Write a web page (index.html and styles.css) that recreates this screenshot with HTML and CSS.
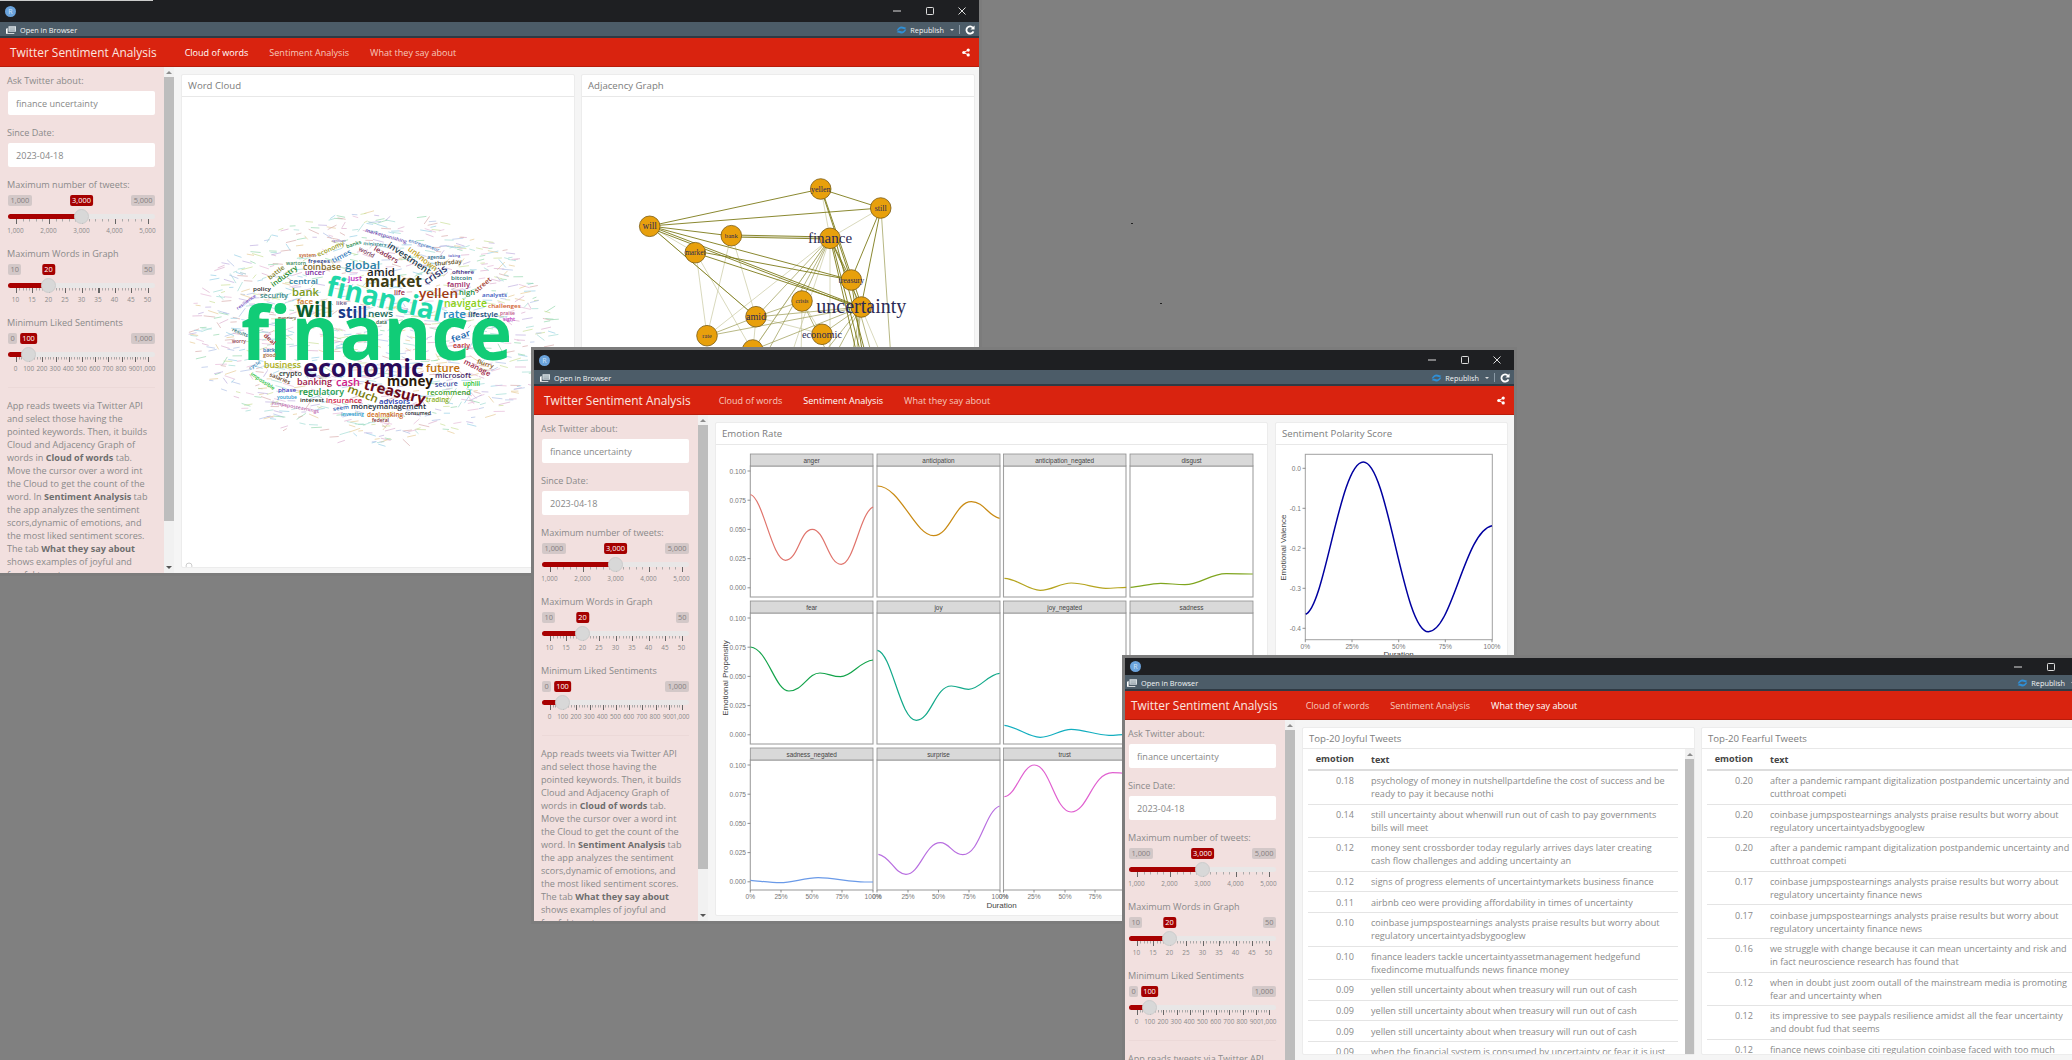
FILE: index.html
```html
<!DOCTYPE html>
<html lang="en">
<head>
<meta charset="utf-8">
<title>Twitter Sentiment Analysis</title>
<link rel="stylesheet" href="styles.css">
</head>
<body>
<svg class="sprite" aria-hidden="true">
  <symbol id="i-browser" viewBox="0 0 12 9"><path d="M3 0h9v6.500H3z" fill="#dfe6ea"/><path d="M0 3l2-1v6h8.500L9.500 9H0z" fill="#fff"/><path d="M4 2h7M4 3.500h7M4 5h7" stroke="#4c5c68" stroke-width=".5"/></symbol>
  <symbol id="i-republish" viewBox="0 0 12 9"><path d="M.5 5C2 2 4 .6 6 .6c2 0 3.600 1.400 5.500 1.400L9.600 3.600C7.600 3.600 6.600 2.800 5.400 2.800 4 2.800 3 4 2.400 5z" fill="#2f8fd6"/><path d="M11.500 4C10 7 8 8.400 6 8.400c-2 0-3.600-1.400-5.500-1.400l1.900-1.600c2 0 3 .8 4.200.8 1.400 0 2.400-1.200 3-2.200z" fill="#2f8fd6"/></symbol>
  <symbol id="i-refresh" viewBox="0 0 11 11"><path d="M8.700 3A4 4 0 1 0 9.300 7" fill="none" stroke="#fff" stroke-width="2"/><path d="M10.500 .5v4.500H6z" fill="#fff"/></symbol>
  <symbol id="i-share" viewBox="0 0 10 10"><path d="M2.200 5L7.800 2M2.200 5l5.600 3" stroke="#fff" stroke-width="1.200"/><circle cx="2.200" cy="5" r="2" fill="#fff"/><circle cx="7.800" cy="2" r="2" fill="#fff"/><circle cx="7.800" cy="8" r="2" fill="#fff"/></symbol>
  <symbol id="i-min" viewBox="0 0 10 10"><path d="M1 5h8" stroke="#ddd" stroke-width="1"/></symbol>
  <symbol id="i-max" viewBox="0 0 10 10"><rect x="1.500" y="1.500" width="7" height="7" rx=".8" fill="none" stroke="#ddd" stroke-width="1"/></symbol>
  <symbol id="i-close" viewBox="0 0 10 10"><path d="M1.500 1.500l7 7m0-7l-7 7" stroke="#ddd" stroke-width="1"/></symbol>
</svg>

<div class="desktop">
  <span class="sliver"></span>
  <span class="speck speck-a"></span>
  <span class="speck speck-b"></span>

  <!-- WINDOW 1: Cloud of words -->
  <section class="window win-1">
    <header class="titlebar"><span class="r-logo">R</span><span class="controls"><svg><use href="#i-min"/></svg><svg><use href="#i-max"/></svg><svg><use href="#i-close"/></svg></span></header>
    <div class="toolbar"><svg class="icon-browser"><use href="#i-browser"/></svg><span>Open in Browser</span><span class="toolbar-right"><svg class="icon-republish"><use href="#i-republish"/></svg><span>Republish</span><i class="caret"></i><i class="sep"></i><svg class="icon-refresh"><use href="#i-refresh"/></svg></span></div>
    <nav class="navbar"><span class="brand">Twitter Sentiment Analysis</span><a class="active">Cloud of words</a><a>Sentiment Analysis</a><a>What they say about</a><svg class="icon-share"><use href="#i-share"/></svg></nav>
    <div class="app-body">
      <aside class="sidebar">
        <div class="field"><label>Ask Twitter about:</label><input class="text-input" value="finance uncertainty" readonly></div>
        <div class="field"><label>Since Date:</label><input class="text-input" value="2023-04-18" readonly></div>
        <div class="slider"><label>Maximum number of tweets:</label>
          <div class="badges"><span class="badge">1,000</span><span class="badge">5,000</span></div>
          <span class="badge badge-value" style="left:73.5px">3,000</span>
          <div class="track"><div class="fill" style="width:73.5px"></div></div><span class="handle" style="left:73.5px"></span>
          <div class="ticks ticks-5"></div>
          <div class="tick-labels"><span>1,000</span><span>2,000</span><span>3,000</span><span>4,000</span><span>5,000</span></div></div>
        <div class="slider"><label>Maximum Words in Graph</label>
          <div class="badges"><span class="badge">10</span><span class="badge">50</span></div>
          <span class="badge badge-value" style="left:40.5px">20</span>
          <div class="track"><div class="fill" style="width:40.5px"></div></div><span class="handle" style="left:40.5px"></span>
          <div class="ticks ticks-9"></div>
          <div class="tick-labels"><span>10</span><span>15</span><span>20</span><span>25</span><span>30</span><span>35</span><span>40</span><span>45</span><span>50</span></div></div>
        <div class="slider"><label>Minimum Liked Sentiments</label>
          <div class="badges"><span class="badge">0</span><span class="badge">1,000</span></div>
          <span class="badge badge-value" style="left:20.5px">100</span>
          <div class="track"><div class="fill" style="width:20.5px"></div></div><span class="handle" style="left:20.5px"></span>
          <div class="ticks ticks-11"></div>
          <div class="tick-labels"><span>0</span><span>100</span><span>200</span><span>300</span><span>400</span><span>500</span><span>600</span><span>700</span><span>800</span><span>900</span><span>1,000</span></div></div>
        <hr class="rule">
        <p class="about">App reads tweets via Twitter API and select those having the pointed keywords. Then, it builds Cloud and Adjacency Graph of words in <b>Cloud of words</b> tab. Move the cursor over a word int the Cloud to get the count of the word. In <b>Sentiment Analysis</b> tab the app analyzes the sentiment scors,dynamic of emotions, and the most liked sentiment scores. The tab <b>What they say about</b> shows examples of joyful and fearful tweets.</p>
      </aside>
      <div class="scrollbar"><i class="arrow-up"></i><div class="thumb"></div><i class="arrow-down"></i></div>
      <main class="main">
        <section class="card card-half"><h3 class="card-title">Word Cloud</h3>
          <div class="card-body">
            <svg class="plot" width="392" height="472" viewBox="182 97 392 472">
              <g id="specks"></g>
              <g class="words">
                <text class="big" x="241" y="360" font-size="76" textLength="271" lengthAdjust="spacingAndGlyphs" fill="#11cc77">finance</text>
                <text class="big" x="325" y="295" font-size="28" textLength="118" lengthAdjust="spacingAndGlyphs" fill="#1fd8a8" transform="rotate(13 325 295)">financial</text>
                <text class="big" x="296" y="316.700" font-size="21" textLength="37" lengthAdjust="spacingAndGlyphs" fill="#0b5c2b">will</text>
                <text class="big" x="338" y="317.700" font-size="16" textLength="29" lengthAdjust="spacingAndGlyphs" fill="#1a3a8a">still</text>
                <text x="368" y="317" font-size="9.700" textLength="25" lengthAdjust="spacingAndGlyphs" fill="#1b6c5c">news</text>
                <text class="big" x="365" y="286.700" font-size="15.600" textLength="57" lengthAdjust="spacingAndGlyphs" fill="#3c3c14">market</text>
                <text x="367" y="276" font-size="11.200" textLength="28" lengthAdjust="spacingAndGlyphs" fill="#222">amid</text>
                <text x="345" y="269" font-size="11.300" textLength="35" lengthAdjust="spacingAndGlyphs" fill="#2a7fa5">global</text>
                <text x="303" y="270" font-size="8.600" textLength="38" lengthAdjust="spacingAndGlyphs" fill="#7f6a2a">coinbase</text>
                <text x="308" y="262.700" font-size="5.800" textLength="22" lengthAdjust="spacingAndGlyphs" fill="#24347f">freezes</text>
                <text x="289" y="284" font-size="7.800" textLength="29" lengthAdjust="spacingAndGlyphs" fill="#2a7fa5">central</text>
                <text x="305" y="275.300" font-size="6.900" textLength="20" lengthAdjust="spacingAndGlyphs" fill="#7a2aa0">uncer</text>
                <text x="348" y="281" font-size="7.200" textLength="14" lengthAdjust="spacingAndGlyphs" fill="#c02ac0">just</text>
                <text x="292" y="296" font-size="10.600" textLength="27" lengthAdjust="spacingAndGlyphs" fill="#7a9a1a">bank</text>
                <text x="260" y="298" font-size="6.800" textLength="28" lengthAdjust="spacingAndGlyphs" fill="#3a8a8a">security</text>
                <text x="253" y="290.700" font-size="5.800" textLength="18" lengthAdjust="spacingAndGlyphs" fill="#222">policy</text>
                <text x="297" y="303.700" font-size="7.200" textLength="16" lengthAdjust="spacingAndGlyphs" fill="#d07a1a">face</text>
                <text x="336" y="305" font-size="5.500" textLength="11" lengthAdjust="spacingAndGlyphs" fill="#6a5a8a">like</text>
                <text x="394" y="295" font-size="6.900" textLength="11" lengthAdjust="spacingAndGlyphs" fill="#a02a4a">life</text>
                <text x="419" y="298" font-size="12.200" textLength="39" lengthAdjust="spacingAndGlyphs" fill="#a03a12">yellen</text>
                <text x="459" y="295" font-size="6.700" textLength="16" lengthAdjust="spacingAndGlyphs" fill="#1a8a3a">high</text>
                <text x="444" y="306.700" font-size="9.800" textLength="43" lengthAdjust="spacingAndGlyphs" fill="#8ad01a">navigate</text>
                <text x="488" y="308" font-size="6.100" textLength="33" lengthAdjust="spacingAndGlyphs" fill="#d05a2a">challenges</text>
                <text x="482" y="297" font-size="5.700" textLength="25" lengthAdjust="spacingAndGlyphs" fill="#3a5ac0">analysts</text>
                <text x="443" y="318" font-size="10.500" textLength="23" lengthAdjust="spacingAndGlyphs" fill="#2a8ac0">rate</text>
                <text x="468" y="317" font-size="7.100" textLength="30" lengthAdjust="spacingAndGlyphs" fill="#1a4a7a">lifestyle</text>
                <text x="500" y="315" font-size="4.800" textLength="15" lengthAdjust="spacingAndGlyphs" fill="#c05a8a">praise</text>
                <text x="503" y="321" font-size="5" textLength="12" lengthAdjust="spacingAndGlyphs" fill="#c03ac0">sight</text>
                <text x="453" y="348.300" font-size="6.300" textLength="17" lengthAdjust="spacingAndGlyphs" fill="#c02a2a">early</text>
                <text x="452" y="274" font-size="6.100" textLength="22" lengthAdjust="spacingAndGlyphs" fill="#3a2a8a">ofthere</text>
                <text x="451" y="280" font-size="5.800" textLength="21" lengthAdjust="spacingAndGlyphs" fill="#1a6a6a">bitcoin</text>
                <text x="447" y="286.700" font-size="7.200" textLength="23" lengthAdjust="spacingAndGlyphs" fill="#a02a6a">family</text>
                <text x="435" y="265.700" font-size="6" textLength="27" lengthAdjust="spacingAndGlyphs" fill="#5a4a1a" transform="rotate(-5 435 265.700)">thursday</text>
                <text class="big" x="303" y="376.700" font-size="25.400" textLength="121" lengthAdjust="spacingAndGlyphs" fill="#2a0a5a">economic</text>
                <text x="264" y="368" font-size="8.200" textLength="37" lengthAdjust="spacingAndGlyphs" fill="#b0b01a">business</text>
                <text x="426" y="372" font-size="11" textLength="34" lengthAdjust="spacingAndGlyphs" fill="#c0700a">future</text>
                <text x="279" y="376" font-size="7" textLength="23" lengthAdjust="spacingAndGlyphs" fill="#3a3a3a">crypto</text>
                <text x="297" y="385" font-size="8.800" textLength="35" lengthAdjust="spacingAndGlyphs" fill="#a01a4a">banking</text>
                <text x="336" y="385.700" font-size="10.900" textLength="24" lengthAdjust="spacingAndGlyphs" fill="#d01a8a">cash</text>
                <text class="big" x="387" y="386" font-size="13.500" textLength="46" lengthAdjust="spacingAndGlyphs" fill="#2a1a0a">money</text>
                <text x="435" y="378" font-size="7.500" textLength="36" lengthAdjust="spacingAndGlyphs" fill="#4a2a6a">microsoft</text>
                <text x="435" y="387" font-size="7" textLength="23" lengthAdjust="spacingAndGlyphs" fill="#3a4aa0" transform="rotate(-3 435 387)">secure</text>
                <text x="463" y="385.700" font-size="6.300" textLength="17" lengthAdjust="spacingAndGlyphs" fill="#1ac02a">uphill</text>
                <text x="427" y="395" font-size="7.900" textLength="44" lengthAdjust="spacingAndGlyphs" fill="#3aa02a">recommend</text>
                <text x="278" y="391.700" font-size="6" textLength="18" lengthAdjust="spacingAndGlyphs" fill="#3a3ac0">phase</text>
                <text x="299" y="395" font-size="8.800" textLength="45" lengthAdjust="spacingAndGlyphs" fill="#1a9a4a">regulatory</text>
                <text x="277" y="399" font-size="5.100" textLength="20" lengthAdjust="spacingAndGlyphs" fill="#2a9ad0">youtube</text>
                <text x="300" y="402" font-size="6" textLength="24" lengthAdjust="spacingAndGlyphs" fill="#222">interest</text>
                <text x="326" y="403" font-size="7.200" textLength="36" lengthAdjust="spacingAndGlyphs" fill="#d01a4a">insurance</text>
                <text x="379" y="404" font-size="7" textLength="31" lengthAdjust="spacingAndGlyphs" fill="#2a3ab0">advisors</text>
                <text x="351" y="409" font-size="7.900" textLength="75" lengthAdjust="spacingAndGlyphs" fill="#1a2a3a">moneymanagement</text>
                <text x="426" y="402" font-size="6.200" textLength="23" lengthAdjust="spacingAndGlyphs" fill="#8ab01a">trading</text>
                <text x="341" y="416" font-size="4.900" textLength="23" lengthAdjust="spacingAndGlyphs" fill="#2aa0d0">investing</text>
                <text x="367" y="416.700" font-size="6.400" textLength="36" lengthAdjust="spacingAndGlyphs" fill="#d06a1a">dealmaking</text>
                <text x="405" y="415" font-size="5" textLength="26" lengthAdjust="spacingAndGlyphs" fill="#222">consumed</text>
                <text x="372" y="421.700" font-size="4.600" textLength="17" lengthAdjust="spacingAndGlyphs" fill="#7a1a2a">federal</text>
                <text x="232" y="343.300" font-size="4.500" textLength="14" lengthAdjust="spacingAndGlyphs" fill="#8a3a4a">worry</text>
                <text x="263" y="351.700" font-size="5" textLength="12" lengthAdjust="spacingAndGlyphs" fill="#2a6ab0">back</text>
                <text x="263" y="357.300" font-size="5.200" textLength="13" lengthAdjust="spacingAndGlyphs" fill="#a06a3a">good</text>
                <text x="299" y="257" font-size="4.500" textLength="17" lengthAdjust="spacingAndGlyphs" fill="#c05a1a">system</text>
                <text x="286" y="265" font-size="5" textLength="20" lengthAdjust="spacingAndGlyphs" fill="#3a8a5a">wartorn</text>
                <text x="427.300" y="259" font-size="5" textLength="18" lengthAdjust="spacingAndGlyphs" fill="#2a6a8a">agenda</text>
                <text x="448.300" y="256.700" font-size="4" textLength="12" lengthAdjust="spacingAndGlyphs" fill="#5a5ac0">taking</text>
                <text x="331.700" y="241.700" font-size="3.500" textLength="14" lengthAdjust="spacingAndGlyphs" fill="#8a6ab0">significant</text>
                <text x="376" y="324" font-size="4.500" textLength="11" lengthAdjust="spacingAndGlyphs" fill="#2a5a3a">data</text>
                <text x="278" y="319" font-size="4" textLength="18" lengthAdjust="spacingAndGlyphs" fill="#5a3a1a">monetary</text>
                <text x="426.700" y="285" font-size="10" textLength="26" lengthAdjust="spacingAndGlyphs" fill="#242a6a" transform="rotate(-35 426.700 285)">crisis</text>
                <text x="273.300" y="287.300" font-size="7.200" textLength="31" lengthAdjust="spacingAndGlyphs" fill="#1a8a2a" transform="rotate(-37 273.300 287.300)">industry</text>
                <text x="270" y="280" font-size="6.300" textLength="19" lengthAdjust="spacingAndGlyphs" fill="#7a7a1a" transform="rotate(-38 270 280)">battle</text>
                <text x="333.300" y="263.300" font-size="7.200" textLength="21" lengthAdjust="spacingAndGlyphs" fill="#3a7fc0" transform="rotate(-28 333.300 263.300)">times</text>
                <text x="407.300" y="250" font-size="8" textLength="35" lengthAdjust="spacingAndGlyphs" fill="#c0a01a" transform="rotate(38 407.300 250)">unknown</text>
                <text x="386.700" y="246.700" font-size="8.900" textLength="50" lengthAdjust="spacingAndGlyphs" fill="#1a3a4a" transform="rotate(34 386.700 246.700)">investment</text>
                <text x="373.300" y="250" font-size="7.100" textLength="27" lengthAdjust="spacingAndGlyphs" fill="#8a2a4a" transform="rotate(30 373.300 250)">leaders</text>
                <text x="358.300" y="250" font-size="5.900" textLength="17" lengthAdjust="spacingAndGlyphs" fill="#7a3a5a" transform="rotate(29 358.300 250)">world</text>
                <text x="318.300" y="256.700" font-size="6.400" textLength="29" lengthAdjust="spacingAndGlyphs" fill="#9aa01a" transform="rotate(-24 318.300 256.700)">economy</text>
                <text x="346.700" y="248.300" font-size="5.200" textLength="16" lengthAdjust="spacingAndGlyphs" fill="#1a8a4a" transform="rotate(-18 346.700 248.300)">banks</text>
                <text x="363.300" y="245" font-size="4.700" textLength="23" lengthAdjust="spacingAndGlyphs" fill="#1a7a7a" transform="rotate(4 363.300 245)">ministers</text>
                <text x="365" y="231.700" font-size="5" textLength="43" lengthAdjust="spacingAndGlyphs" fill="#6a4ab0" transform="rotate(16 365 231.700)">marketpunishing</text>
                <text x="408.300" y="241.700" font-size="4.600" textLength="32" lengthAdjust="spacingAndGlyphs" fill="#4a7ac0" transform="rotate(18 408.300 241.700)">entrepreneur</text>
                <text x="476.700" y="293.300" font-size="6.700" textLength="20" lengthAdjust="spacingAndGlyphs" fill="#a03a2a" transform="rotate(-41 476.700 293.300)">street</text>
                <text x="463.300" y="363.300" font-size="7.400" textLength="29" lengthAdjust="spacingAndGlyphs" fill="#a02a4a" transform="rotate(27 463.300 363.300)">manage</text>
                <text x="476.700" y="363.300" font-size="6" textLength="17" lengthAdjust="spacingAndGlyphs" fill="#8a5a1a" transform="rotate(17 476.700 363.300)">flurry</text>
                <text x="452.700" y="342.700" font-size="8.700" textLength="20" lengthAdjust="spacingAndGlyphs" fill="#1a6ab0" transform="rotate(-22 452.700 342.700)">fear</text>
                <text class="big" x="363" y="389" font-size="14.500" textLength="63" lengthAdjust="spacingAndGlyphs" fill="#6a0a1a" transform="rotate(14 363 389)">treasury</text>
                <text x="346.700" y="391.700" font-size="11" textLength="32" lengthAdjust="spacingAndGlyphs" fill="#7a7a0a" transform="rotate(21 346.700 391.700)">much</text>
                <text x="269" y="376" font-size="5.500" textLength="22" lengthAdjust="spacingAndGlyphs" fill="#5a3a1a" transform="rotate(22 269 376)">salaries</text>
                <text x="250" y="375" font-size="5.400" textLength="28" lengthAdjust="spacingAndGlyphs" fill="#2ac03a" transform="rotate(33 250 375)">impossible</text>
                <text x="250" y="370" font-size="4.600" textLength="13" lengthAdjust="spacingAndGlyphs" fill="#2a7ab0" transform="rotate(-32 250 370)">cycle</text>
                <text x="263.300" y="336" font-size="5.800" textLength="14" lengthAdjust="spacingAndGlyphs" fill="#a02a2a" transform="rotate(42 263.300 336)">deal</text>
                <text x="231.700" y="330.700" font-size="4.900" textLength="17" lengthAdjust="spacingAndGlyphs" fill="#1a6a6a" transform="rotate(23 231.700 330.700)">results</text>
                <text x="237.700" y="310" font-size="4.500" textLength="23" lengthAdjust="spacingAndGlyphs" fill="#6a4ac0" transform="rotate(-36 237.700 310)">resilience</text>
                <text x="271.700" y="404" font-size="5" textLength="48" lengthAdjust="spacingAndGlyphs" fill="#c06ab0" transform="rotate(11 271.700 404)">jumpspostearnings</text>
                <text x="333.300" y="411" font-size="5.500" textLength="16" lengthAdjust="spacingAndGlyphs" fill="#2a5ab0" transform="rotate(-8 333.300 411)">seem</text>
              </g>
              <circle class="spinner" cx="189" cy="566" r="3"/>
            </svg>
          </div>
        </section>
        <section class="card card-half"><h3 class="card-title">Adjacency Graph</h3>
          <div class="card-body">
            <svg class="plot" width="392" height="472" viewBox="582 97 392 472">
              <g class="edge-faint">
                <path d="M650 226L696 253M650 226L756 317M732 236L756 317M732 236L830 238M731 236L707 336M696 253L707 336M696 253L752 350M821 189L830 238M881 208L830 238M831 238L707 336M830 238L753 350M830 238L770 420M830 238L830 420M802 301L822 334M802 301L800 420M861 307L900 400M756 317L822 334M756 317L753 350"/>
              </g>
              <g class="edge-mid">
                <path d="M830 238L756 317M830 238L730 420M830 238L802 301M802 301L860 420M756 317L802 301M756 317L861 307M707 336L861 307M707 336L756 317M822 334L861 307M753 350L861 307M753 350L830 238M861 307L850 420M861 307L840 420M861 307L800 420M861 307L770 420M881 208L895 420M851 280L890 420"/>
              </g>
              <g class="edge-strong">
                <path d="M650 226L821 189M650 226L881 208M650 226L732 236M650 226L851 280M650 226L861 307M650 228L861 309M696 253L861 307M696 251L851 280M650 226L756 317M732 235L830 237M732 237L830 239M821 189L881 208M821 189L851 280M822 190L862 307M881 208L851 280M881 208L861 307M830 238L851 280M830 238L861 307M830 238L872 420M831 238L878 420M835 238L883 420M851 280L873 420"/>
              </g>
              <g class="nodes">
                <circle cx="820.700" cy="189" r="10.300"/><circle cx="880.700" cy="208" r="10.300"/><circle cx="649.700" cy="226.300" r="10.300"/><circle cx="731.300" cy="235.700" r="10.300"/><circle cx="695.300" cy="252.700" r="10.300"/><circle cx="830" cy="238.300" r="10.300"/><circle cx="851.300" cy="280" r="10.300"/><circle cx="802" cy="301" r="10.300"/><circle cx="861.300" cy="307" r="10.300"/><circle cx="756" cy="316.700" r="10.300"/><circle cx="822" cy="334.300" r="10.300"/><circle cx="707" cy="335.700" r="10.300"/><circle cx="752.700" cy="350" r="10.300"/>
              </g>
              <g class="node-labels">
                <text x="820.700" y="191.500" font-size="8">yellen</text><text x="880.700" y="210.500" font-size="8">still</text><text x="649.700" y="229.300" font-size="9.400">will</text><text x="731.300" y="238" font-size="6.700">bank</text><text x="695.300" y="255" font-size="7.300">market</text><text x="830" y="243" font-size="15">finance</text><text x="851.300" y="282.500" font-size="8">treasury</text><text x="802" y="303" font-size="6.200">crisis</text><text x="861.300" y="312.500" font-size="20">uncertainty</text><text x="756" y="320" font-size="10">amid</text><text x="822" y="337.500" font-size="10.300">economic</text><text x="707" y="338" font-size="6.200">rate</text>
              </g>
            </svg>
          </div>
        </section>
      </main>
    </div>
  </section>

  <!-- WINDOW 2: Sentiment Analysis -->
  <section class="window win-2">
    <header class="titlebar"><span class="r-logo">R</span><span class="controls"><svg><use href="#i-min"/></svg><svg><use href="#i-max"/></svg><svg><use href="#i-close"/></svg></span></header>
    <div class="toolbar"><svg class="icon-browser"><use href="#i-browser"/></svg><span>Open in Browser</span><span class="toolbar-right"><svg class="icon-republish"><use href="#i-republish"/></svg><span>Republish</span><i class="caret"></i><i class="sep"></i><svg class="icon-refresh"><use href="#i-refresh"/></svg></span></div>
    <nav class="navbar"><span class="brand">Twitter Sentiment Analysis</span><a>Cloud of words</a><a class="active">Sentiment Analysis</a><a>What they say about</a><svg class="icon-share"><use href="#i-share"/></svg></nav>
    <div class="app-body">
      <aside class="sidebar">
        <div class="field"><label>Ask Twitter about:</label><input class="text-input" value="finance uncertainty" readonly></div>
        <div class="field"><label>Since Date:</label><input class="text-input" value="2023-04-18" readonly></div>
        <div class="slider"><label>Maximum number of tweets:</label>
          <div class="badges"><span class="badge">1,000</span><span class="badge">5,000</span></div>
          <span class="badge badge-value" style="left:73.5px">3,000</span>
          <div class="track"><div class="fill" style="width:73.5px"></div></div><span class="handle" style="left:73.5px"></span>
          <div class="ticks ticks-5"></div>
          <div class="tick-labels"><span>1,000</span><span>2,000</span><span>3,000</span><span>4,000</span><span>5,000</span></div></div>
        <div class="slider"><label>Maximum Words in Graph</label>
          <div class="badges"><span class="badge">10</span><span class="badge">50</span></div>
          <span class="badge badge-value" style="left:40.5px">20</span>
          <div class="track"><div class="fill" style="width:40.5px"></div></div><span class="handle" style="left:40.5px"></span>
          <div class="ticks ticks-9"></div>
          <div class="tick-labels"><span>10</span><span>15</span><span>20</span><span>25</span><span>30</span><span>35</span><span>40</span><span>45</span><span>50</span></div></div>
        <div class="slider"><label>Minimum Liked Sentiments</label>
          <div class="badges"><span class="badge">0</span><span class="badge">1,000</span></div>
          <span class="badge badge-value" style="left:20.5px">100</span>
          <div class="track"><div class="fill" style="width:20.5px"></div></div><span class="handle" style="left:20.5px"></span>
          <div class="ticks ticks-11"></div>
          <div class="tick-labels"><span>0</span><span>100</span><span>200</span><span>300</span><span>400</span><span>500</span><span>600</span><span>700</span><span>800</span><span>900</span><span>1,000</span></div></div>
        <hr class="rule">
        <p class="about">App reads tweets via Twitter API and select those having the pointed keywords. Then, it builds Cloud and Adjacency Graph of words in <b>Cloud of words</b> tab. Move the cursor over a word int the Cloud to get the count of the word. In <b>Sentiment Analysis</b> tab the app analyzes the sentiment scors,dynamic of emotions, and the most liked sentiment scores. The tab <b>What they say about</b> shows examples of joyful and fearful tweets.</p>
      </aside>
      <div class="scrollbar"><i class="arrow-up"></i><div class="thumb"></div><i class="arrow-down"></i></div>
      <main class="main">
        <section class="card card-emotion"><h3 class="card-title">Emotion Rate</h3>
          <div class="card-body">
            <svg class="plot" width="551" height="472" viewBox="716 444 551 472">
              <g class="panels">
                <rect x="750.300" y="465" width="122.700" height="131"/><rect x="877" y="465" width="123" height="131"/><rect x="1003.500" y="465" width="122.500" height="131"/><rect x="1130" y="465" width="123" height="131"/>
                <rect x="750.300" y="612" width="122.700" height="131"/><rect x="877" y="612" width="123" height="131"/><rect x="1003.500" y="612" width="122.500" height="131"/><rect x="1130" y="612" width="123" height="131"/>
                <rect x="750.300" y="759" width="122.700" height="130"/><rect x="877" y="759" width="123" height="130"/><rect x="1003.500" y="759" width="122.500" height="130"/>
              </g>
              <g class="strips">
                <rect x="750.300" y="453" width="122.700" height="12"/><rect x="877" y="453" width="123" height="12"/><rect x="1003.500" y="453" width="122.500" height="12"/><rect x="1130" y="453" width="123" height="12"/>
                <rect x="750.300" y="600" width="122.700" height="12"/><rect x="877" y="600" width="123" height="12"/><rect x="1003.500" y="600" width="122.500" height="12"/><rect x="1130" y="600" width="123" height="12"/>
                <rect x="750.300" y="747" width="122.700" height="12"/><rect x="877" y="747" width="123" height="12"/><rect x="1003.500" y="747" width="122.500" height="12"/>
              </g>
              <g class="strip-text">
                <text x="811.700" y="461.500">anger</text><text x="938.500" y="461.500">anticipation</text><text x="1064.700" y="461.500">anticipation_negated</text><text x="1191.500" y="461.500">disgust</text>
                <text x="811.700" y="608.500">fear</text><text x="938.500" y="608.500">joy</text><text x="1064.700" y="608.500">joy_negated</text><text x="1191.500" y="608.500">sadness</text>
                <text x="811.700" y="755.500">sadness_negated</text><text x="938.500" y="755.500">surprise</text><text x="1064.700" y="755.500">trust</text>
              </g>
              <path class="axis-ticks" d="M747.500 470h2.800M747.500 499.200h2.800M747.500 528.400h2.800M747.500 557.600h2.800M747.500 586.800h2.800M747.500 617h2.800M747.500 646.200h2.800M747.500 675.400h2.800M747.500 704.600h2.800M747.500 733.800h2.800M747.500 764h2.800M747.500 793.200h2.800M747.500 822.400h2.800M747.500 851.600h2.800M747.500 880.800h2.800M750.300 889v2.500M781 889v2.500M812 889v2.500M842 889v2.500M873 889v2.500M877 889v2.500M908 889v2.500M938.500 889v2.500M969 889v2.500M1000 889v2.500M1003.500 889v2.500M1034 889v2.500M1065 889v2.500M1095 889v2.500"/>
              <g class="tick-text tick-y">
                <text x="746" y="472.500">0.100</text><text x="746" y="501.700">0.075</text><text x="746" y="530.900">0.050</text><text x="746" y="560.100">0.025</text><text x="746" y="589.300">0.000</text>
                <text x="746" y="619.500">0.100</text><text x="746" y="648.700">0.075</text><text x="746" y="677.900">0.050</text><text x="746" y="707.100">0.025</text><text x="746" y="736.300">0.000</text>
                <text x="746" y="766.500">0.100</text><text x="746" y="795.700">0.075</text><text x="746" y="824.900">0.050</text><text x="746" y="854.100">0.025</text><text x="746" y="883.300">0.000</text>
              </g>
              <g class="tick-text tick-x">
                <text x="750.300" y="898">0%</text><text x="781" y="898">25%</text><text x="812" y="898">50%</text><text x="842" y="898">75%</text><text x="873" y="898">100%</text>
                <text x="877" y="898">0%</text><text x="908" y="898">25%</text><text x="938.500" y="898">50%</text><text x="969" y="898">75%</text><text x="1000" y="898">100%</text>
                <text x="1003.500" y="898">0%</text><text x="1034" y="898">25%</text><text x="1065" y="898">50%</text><text x="1095" y="898">75%</text>
              </g>
              <text class="axis-title" x="1001.500" y="907">Duration</text>
              <text class="axis-title" x="728" y="677" transform="rotate(-90 728 677)">Emotional Propensity</text>
              <g class="curves">
                <path stroke="#e0746c" d="M750.500 493.500C763 497 772 559.300 785.400 559.300C798 559.300 800 528.300 812.300 528.300C825 528.300 828 563.300 841.200 563.300C854 563.300 860 512 873 506"/>
                <path stroke="#c98a12" d="M877.400 485C900 485 915 534.700 933.500 534.700C950 534.700 955 500.700 971.400 500.700C984 500.700 988 515 999.600 517.300"/>
                <path stroke="#b5a41e" d="M1004.400 577.300C1018 578 1028 589.300 1040.200 589.300C1052 589.300 1060 582 1071.200 582C1084 582 1095 587.300 1105.700 587.300C1112 587.300 1120 586.500 1126.300 586.300"/>
                <path stroke="#7fa51e" d="M1130.500 586.300C1140 586 1150 582.300 1160.800 582.300C1170 582.300 1175 583.700 1184.900 583.700C1200 583.700 1210 572.700 1226.200 572.700C1235 572.700 1245 573 1252.700 573"/>
                <path stroke="#12a34a" d="M750.500 646C768 648 775 690 788.900 690C803 690 808 672 819.900 672C828 672 832 675.700 840.500 675.700C852 675.700 860 660 873 659"/>
                <path stroke="#12a98a" d="M877.400 649.300C892 652 900 719.300 916.300 719.300C931 719.300 935 685 951.400 685C958 685 962 688.300 968.600 688.300C980 688.300 988 673 999.600 672.300"/>
                <path stroke="#12aebf" d="M1004.400 724.300C1018 726 1028 736.300 1040.200 736.300C1052 736.300 1060 728.300 1071.200 728.300C1084 728.300 1096 734.300 1109 734.300C1115 734.300 1120 733.500 1126 733.300"/>
                <path stroke="#6a9ae8" d="M750.500 879.300C760 880 770 881.700 780.300 881.700C792 881.700 805 876.700 818.100 876.700C833 876.700 850 881 864.600 881C868 881 870 881 873 881"/>
                <path stroke="#b86ee0" d="M878.400 853.300C890 855 895 873.300 906 873.300C920 873.300 925 841.700 940.400 841.700C950 841.700 952 853.700 962.800 853.700C980 853.700 985 810 999.600 805"/>
                <path stroke="#e060d0" d="M1004.400 795.700C1016 795 1022 764 1034.400 764C1050 764 1055 811 1071.200 811C1088 811 1092 771.700 1112.600 771.700C1118 771.700 1122 772 1126 772.500"/>
              </g>
            </svg>
          </div>
        </section>
        <section class="card card-polarity"><h3 class="card-title">Sentiment Polarity Score</h3>
          <div class="card-body">
            <svg class="plot" width="232" height="472" viewBox="1276 444 232 472">
              <rect class="polarity-frame" x="1305.300" y="453.300" width="187" height="185.400"/>
              <path class="axis-ticks" d="M1302.500 467.300h2.800M1302.500 507.300h2.800M1302.500 547.300h2.800M1302.500 587.300h2.800M1302.500 627.300h2.800M1305.300 638.700v2.500M1352 638.700v2.500M1398.700 638.700v2.500M1445.300 638.700v2.500M1492 638.700v2.500"/>
              <g class="tick-text tick-y">
                <text x="1301" y="469.800">0.0</text><text x="1301" y="509.800">-0.1</text><text x="1301" y="549.800">-0.2</text><text x="1301" y="589.800">-0.3</text><text x="1301" y="629.800">-0.4</text>
              </g>
              <g class="tick-text tick-x">
                <text x="1305.300" y="647.500">0%</text><text x="1352" y="647.500">25%</text><text x="1398.700" y="647.500">50%</text><text x="1445.300" y="647.500">75%</text><text x="1492" y="647.500">100%</text>
              </g>
              <text class="axis-title" x="1398.700" y="656">Duration</text>
              <text class="axis-title" x="1286" y="546.700" transform="rotate(-90 1286 546.700)">Emotional Valence</text>
              <path class="polarity-curve" d="M1305.700 613.300C1325 605 1340 461 1363.300 461C1388 461 1403 630.700 1428.300 630.700C1452 630.700 1465 530 1492 524.700"/>
            </svg>
          </div>
        </section>
      </main>
    </div>
  </section>

  <!-- WINDOW 3: What they say about -->
  <section class="window win-3">
    <header class="titlebar"><span class="r-logo">R</span><span class="controls"><svg><use href="#i-min"/></svg><svg><use href="#i-max"/></svg><svg><use href="#i-close"/></svg></span></header>
    <div class="toolbar"><svg class="icon-browser"><use href="#i-browser"/></svg><span>Open in Browser</span><span class="toolbar-right"><svg class="icon-republish"><use href="#i-republish"/></svg><span>Republish</span><i class="caret"></i><i class="sep"></i><svg class="icon-refresh"><use href="#i-refresh"/></svg></span></div>
    <nav class="navbar"><span class="brand">Twitter Sentiment Analysis</span><a>Cloud of words</a><a>Sentiment Analysis</a><a class="active">What they say about</a><svg class="icon-share"><use href="#i-share"/></svg></nav>
    <div class="app-body">
      <aside class="sidebar">
        <div class="field"><label>Ask Twitter about:</label><input class="text-input" value="finance uncertainty" readonly></div>
        <div class="field"><label>Since Date:</label><input class="text-input" value="2023-04-18" readonly></div>
        <div class="slider"><label>Maximum number of tweets:</label>
          <div class="badges"><span class="badge">1,000</span><span class="badge">5,000</span></div>
          <span class="badge badge-value" style="left:73.5px">3,000</span>
          <div class="track"><div class="fill" style="width:73.5px"></div></div><span class="handle" style="left:73.5px"></span>
          <div class="ticks ticks-5"></div>
          <div class="tick-labels"><span>1,000</span><span>2,000</span><span>3,000</span><span>4,000</span><span>5,000</span></div></div>
        <div class="slider"><label>Maximum Words in Graph</label>
          <div class="badges"><span class="badge">10</span><span class="badge">50</span></div>
          <span class="badge badge-value" style="left:40.5px">20</span>
          <div class="track"><div class="fill" style="width:40.5px"></div></div><span class="handle" style="left:40.5px"></span>
          <div class="ticks ticks-9"></div>
          <div class="tick-labels"><span>10</span><span>15</span><span>20</span><span>25</span><span>30</span><span>35</span><span>40</span><span>45</span><span>50</span></div></div>
        <div class="slider"><label>Minimum Liked Sentiments</label>
          <div class="badges"><span class="badge">0</span><span class="badge">1,000</span></div>
          <span class="badge badge-value" style="left:20.5px">100</span>
          <div class="track"><div class="fill" style="width:20.5px"></div></div><span class="handle" style="left:20.5px"></span>
          <div class="ticks ticks-11"></div>
          <div class="tick-labels"><span>0</span><span>100</span><span>200</span><span>300</span><span>400</span><span>500</span><span>600</span><span>700</span><span>800</span><span>900</span><span>1,000</span></div></div>
        <hr class="rule">
        <p class="about">App reads tweets via Twitter API and select those having the pointed keywords. Then, it builds Cloud and Adjacency Graph of words in <b>Cloud of words</b> tab. Move the cursor over a word int the Cloud to get the count of the word. In <b>Sentiment Analysis</b> tab the app analyzes the sentiment scors,dynamic of emotions, and the most liked sentiment scores. The tab <b>What they say about</b> shows examples of joyful and fearful tweets.</p>
      </aside>
      <div class="scrollbar"><i class="arrow-up"></i><div class="thumb"></div><i class="arrow-down"></i></div>
      <main class="main">
        <section class="card card-tweets"><h3 class="card-title">Top-20 Joyful Tweets</h3>
          <div class="card-body table-wrap">
            <table class="tweets">
              <thead><tr><th>emotion</th><th>text</th></tr></thead>
              <tbody>
                <tr><td>0.18</td><td>psychology of money in nutshellpartdefine the cost of success and be<br>ready to pay it because nothi</td></tr>
                <tr><td>0.14</td><td>still uncertainty about whenwill run out of cash to pay governments<br>bills will meet</td></tr>
                <tr><td>0.12</td><td>money sent crossborder today regularly arrives days later creating<br>cash flow challenges and adding uncertainty an</td></tr>
                <tr><td>0.12</td><td>signs of progress elements of uncertaintymarkets business finance</td></tr>
                <tr><td>0.11</td><td>airbnb ceo were providing affordability in times of uncertainty</td></tr>
                <tr><td>0.10</td><td>coinbase jumpspostearnings analysts praise results but worry about<br>regulatory uncertaintyadsbygooglew</td></tr>
                <tr><td>0.10</td><td>finance leaders tackle uncertaintyassetmanagement hedgefund<br>fixedincome mutualfunds news finance money</td></tr>
                <tr><td>0.09</td><td>yellen still uncertainty about when treasury will run out of cash</td></tr>
                <tr><td>0.09</td><td>yellen still uncertainty about when treasury will run out of cash</td></tr>
                <tr><td>0.09</td><td>yellen still uncertainty about when treasury will run out of cash</td></tr>
                <tr><td>0.09</td><td>when the financial system is consumed by uncertainty or fear it is just<br>about time until it all comes crashing down</td></tr>
              </tbody>
            </table>
            <div class="scrollbar scrollbar-table"><i class="arrow-up"></i><div class="thumb"></div></div>
          </div>
        </section>
        <section class="card card-tweets"><h3 class="card-title">Top-20 Fearful Tweets</h3>
          <div class="card-body table-wrap">
            <table class="tweets">
              <thead><tr><th>emotion</th><th>text</th></tr></thead>
              <tbody>
                <tr><td>0.20</td><td>after a pandemic rampant digitalization postpandemic uncertainty and<br>cutthroat competi</td></tr>
                <tr><td>0.20</td><td>coinbase jumpspostearnings analysts praise results but worry about<br>regulatory uncertaintyadsbygooglew</td></tr>
                <tr><td>0.20</td><td>after a pandemic rampant digitalization postpandemic uncertainty and<br>cutthroat competi</td></tr>
                <tr><td>0.17</td><td>coinbase jumpspostearnings analysts praise results but worry about<br>regulatory uncertainty finance news</td></tr>
                <tr><td>0.17</td><td>coinbase jumpspostearnings analysts praise results but worry about<br>regulatory uncertainty finance news</td></tr>
                <tr><td>0.16</td><td>we struggle with change because it can mean uncertainty and risk and<br>in fact neuroscience research has found that</td></tr>
                <tr><td>0.12</td><td>when in doubt just zoom outall of the mainstream media is promoting<br>fear and uncertainty when</td></tr>
                <tr><td>0.12</td><td>its impressive to see paypals resilience amidst all the fear uncertainty<br>and doubt fud that seems</td></tr>
                <tr><td>0.12</td><td>finance news coinbase citi regulation coinbase faced with too much<br>regulatory uncertainty rating cut to neutr</td></tr>
              </tbody>
            </table>
          </div>
        </section>
      </main>
    </div>
  </section>
</div>
<script src="script.js"></script>
</body>
</html>
```
FILE: styles.css
```css
*{box-sizing:border-box}
html,body{margin:0;height:100%;overflow:hidden}
body{background:#808080;font-family:"Open Sans","Liberation Sans",sans-serif;color:#8a8a8a}
.sprite{display:none}
.desktop{position:relative;width:2072px;height:1060px;overflow:hidden}
.sliver{position:absolute;left:0;top:0;width:153px;height:1px;background:#ccc;z-index:5}
.speck{position:absolute;width:2px;height:1px;background:#222}
.speck-a{left:1131px;top:223px}
.speck-b{left:1160px;top:303px}

/* Windows on the desktop */
.window{position:absolute;display:flex;flex-direction:column;overflow:hidden;box-shadow:0 0 0 3px #7c7c7c}
.win-1{left:0;top:0;width:979px;height:573px;z-index:1}
.win-2{left:534px;top:350px;width:980px;height:571px;z-index:2}
.win-3{left:1125px;top:658px;width:975px;height:402px;z-index:3}
.win-1 .titlebar{height:22px}
.win-2 .titlebar{height:20px}
.win-3 .titlebar{height:17px}

.titlebar{display:flex;align-items:center;justify-content:space-between;flex:none;background:#1e1f22;padding:0 12px 0 5px}
.r-logo{display:flex;align-items:center;justify-content:center;width:11px;height:11px;border-radius:50%;background:#6ba3dc;color:#cfe2f5;font-size:7px;line-height:1}
.controls{display:flex;gap:22.500px}
.controls svg{width:10px;height:10px}

.toolbar{display:flex;align-items:center;flex:none;height:16px;padding:1px 3px 0 6px;background:#4c5c68;border-bottom:2px solid #2f3a44;color:#f2f4f5;font-size:7.300px}
.win-3 .toolbar{padding-left:2px}
.icon-browser{width:10px;height:8px;margin-right:4px}
.toolbar-right{display:flex;align-items:center;margin-left:auto}
.icon-republish{width:11px;height:8px;margin-right:3px}
.caret{width:0;height:0;margin-left:6px;border:2px solid transparent;border-top-color:#ddd;border-bottom:0}
.sep{width:1px;height:9px;margin:0 5px;background:#8a99a5}
.icon-refresh{width:10px;height:10px;margin-right:1px}

.navbar{display:flex;align-items:center;flex:none;height:29px;padding:0 9px 0 10px;background:#d9230f;border-bottom:1px solid #b81c0b;color:#f6c9be;font-size:9.050px}
.win-3 .navbar{padding-left:6px}
.brand{margin-right:28px;color:#fbe6e0;font-size:11.900px}
.navbar a{margin-right:21px}
.navbar a.active{color:#fff}
.icon-share{width:8px;height:9px;margin-left:auto}

.app-body{display:flex;flex:1;min-height:0;background:#f5f5f5}
.sidebar{flex:none;width:164px;padding:8px 9px 0 8px;overflow:hidden;background:#f2e0df;font-size:9.100px}
.win-3 .sidebar{width:160px;padding-left:4px}

.field{margin-bottom:12px}
label{display:block;height:12px;margin-left:-1px;line-height:12px;color:#8a8a8a;white-space:nowrap}
.field label{margin-bottom:4px}
.text-input{display:block;width:147px;height:24px;padding:0 8px;border:0;border-radius:2px;background:#fff;color:#888;font:9.100px "Open Sans",sans-serif;outline:0}

.slider{position:relative;height:69px;width:147px}
.badges{display:flex;justify-content:space-between;margin-top:4px}
.badge{display:block;height:11px;padding:0 2.500px;border-radius:2px;background:#d3c8c8;color:#867e7e;font-size:7.400px;line-height:11px}
.badge-value{position:absolute;top:16px;transform:translateX(-50%);background:#a50000;color:#fff}
.track{height:5px;margin-top:7.500px;border-radius:3px;background:#e9e7e7;overflow:hidden}
.fill{height:100%;background:#a80000}
.handle{position:absolute;top:29.500px;width:15px;height:15px;margin-left:-7.500px;border-radius:50%;background:#d8d8d8;border:1px solid #ccc}
.ticks{width:133px;height:5px;margin:.500px 7.500px 0;background-repeat:no-repeat;background-size:100% 5px,100% 2.500px;background-image:repeating-linear-gradient(90deg,#666 0 1px,transparent 1px var(--major)),repeating-linear-gradient(90deg,#aaa 0 1px,transparent 1px var(--minor))}
.ticks-5{--major:33px;--minor:6.600px}
.ticks-9{--major:16.500px;--minor:3.300px}
.ticks-11{--major:13.200px;--minor:2.640px}
.tick-labels{display:flex;justify-content:space-between;margin:2.500px 7.500px 0;font-size:6.400px;line-height:8px;color:#8a8a8a}
.tick-labels span{display:flex;justify-content:center;width:0;white-space:nowrap}
.rule{position:relative;top:1px;margin:0;border:0;border-top:1px solid #ecd9d8}
.about{margin:12px 0 0 -1px;width:148px;font-size:9.100px;line-height:13px;color:#8a8a8a}
.about b{color:#6e6e6e;font-weight:700}

.scrollbar{display:flex;flex-direction:column;align-items:center;flex:none;width:10px;background:#f1f1f1}
.arrow-up,.arrow-down{flex:none;display:block;width:0;height:0;border:3px solid transparent}
.arrow-up{margin:4px 0 3px;border-bottom:3px solid #8d8d8d;border-top:0}
.arrow-down{margin:auto 0 4px;border-top:3px solid #555;border-bottom:0}
.thumb{flex:none;width:10px;height:444px;background:#bdbdbd}

.main{display:flex;flex:1;min-width:0;gap:6px;padding:7px 4px 5px 7px}
.win-2 .main{gap:7px}
.card{display:flex;flex-direction:column;min-width:0;background:#fff;border:1px solid #ececec;border-radius:2px}
.card-half{flex:1 1 0}
.card-emotion{flex:0 0 553px}
.card-polarity{flex:0 0 233px}
.card-tweets{flex:0 0 393px}
.card-title{flex:none;display:flex;align-items:center;height:22px;margin:0;padding:0 6px;border-bottom:1px solid #e8e8e8;color:#7c7c7c;font-size:9.650px;font-weight:400}
.win-3 .card-title{height:21px}
.card-body{flex:1;min-height:0;overflow:hidden}
.plot{display:block}

.words text{font-family:"Open Sans",sans-serif;font-weight:600}
.words text.big{font-weight:700}
.spinner{fill:none;stroke:#ccc}
.edge-faint path,.edge-mid path,.edge-strong path{fill:none}
.edge-faint path{stroke:#c9c9a0;stroke-width:.7}
.edge-mid path{stroke:#9a9a50;stroke-width:.7}
.edge-strong path{stroke:#7d7a18;stroke-width:.9}
.nodes circle{fill:#e8a00c;stroke:#7a5a10;stroke-width:.8}
.node-labels text{font-family:"Liberation Serif",serif;fill:#2a2a55;text-anchor:middle}

.panels rect{fill:#fff;stroke:#a0a0a0;stroke-width:1.100}
.strips rect{fill:#d9d9d9;stroke:#8f8f8f;stroke-width:.8}
.strip-text text{font:6.400px "Liberation Sans",sans-serif;fill:#444;text-anchor:middle}
.tick-text text{font:6.600px "Liberation Sans",sans-serif;fill:#777}
.tick-y text{text-anchor:end}
.tick-x text{text-anchor:middle}
.axis-ticks{fill:none;stroke:#666;stroke-width:.7}
.axis-title{font:8px "Liberation Sans",sans-serif;fill:#444;text-anchor:middle}
.curves path{fill:none;stroke-width:1.200}
.polarity-frame{fill:#fff;stroke:#a0a0a0;stroke-width:1}
.polarity-curve{fill:none;stroke:#0000a0;stroke-width:1.500}

.table-wrap{display:flex;align-items:flex-start;padding-left:5px}
.tweets{flex:none;width:370px;border-collapse:collapse;table-layout:fixed;font-size:9.100px;line-height:13px}
.tweets th:first-child{width:50px}
.tweets th,.tweets td{padding:3.300px 0 3.300px 13px;text-align:left;vertical-align:top;color:#8a8a8a;font-weight:400;white-space:nowrap}
.tweets th:first-child,.tweets td:first-child{padding:3.300px 4px 3.300px 0;text-align:right}
.tweets th{height:20px;padding-top:4px;padding-bottom:3px;border-bottom:2px solid #ddd;color:#444;font-weight:700}
.tweets td{border-bottom:1px solid #e4e4e4}
.scrollbar-table{margin-left:7px;align-self:stretch}
```
FILE: script.js
```js
// Scatter the long tail of tiny words of the cloud as short dashes inside the ellipse.
(function () {
  var group = document.getElementById('specks');
  var palette = ['#98d8b0', '#dcb0d0', '#b0c2e6', '#e6cc98', '#a4dcd6', '#cce09a', '#d8aeae', '#c0b0e0', '#98d0e6', '#e6bcd8'];
  var seed = 20230418;
  function rnd() { seed = (seed * 1664525 + 1013904223) % 4294967296; return seed / 4294967296; }
  var ns = 'http://www.w3.org/2000/svg';
  for (var i = 0; i < 1100; i++) {
    var t = rnd() * Math.PI * 2, r = Math.sqrt(rnd());
    var x = 370 + Math.cos(t) * r * 182, y = 329 + Math.sin(t) * r * 116;
    var len = 4 + rnd() * 8, a = (rnd() - 0.5) * (rnd() < 0.2 ? 2.2 : 0.7);
    var line = document.createElementNS(ns, 'line');
    line.setAttribute('x1', x.toFixed(1));
    line.setAttribute('y1', y.toFixed(1));
    line.setAttribute('x2', (x + Math.cos(a) * len).toFixed(1));
    line.setAttribute('y2', (y + Math.sin(a) * len).toFixed(1));
    line.setAttribute('stroke', palette[Math.floor(rnd() * palette.length)]);
    line.setAttribute('stroke-width', '.7');
    group.appendChild(line);
  }
})();
```
